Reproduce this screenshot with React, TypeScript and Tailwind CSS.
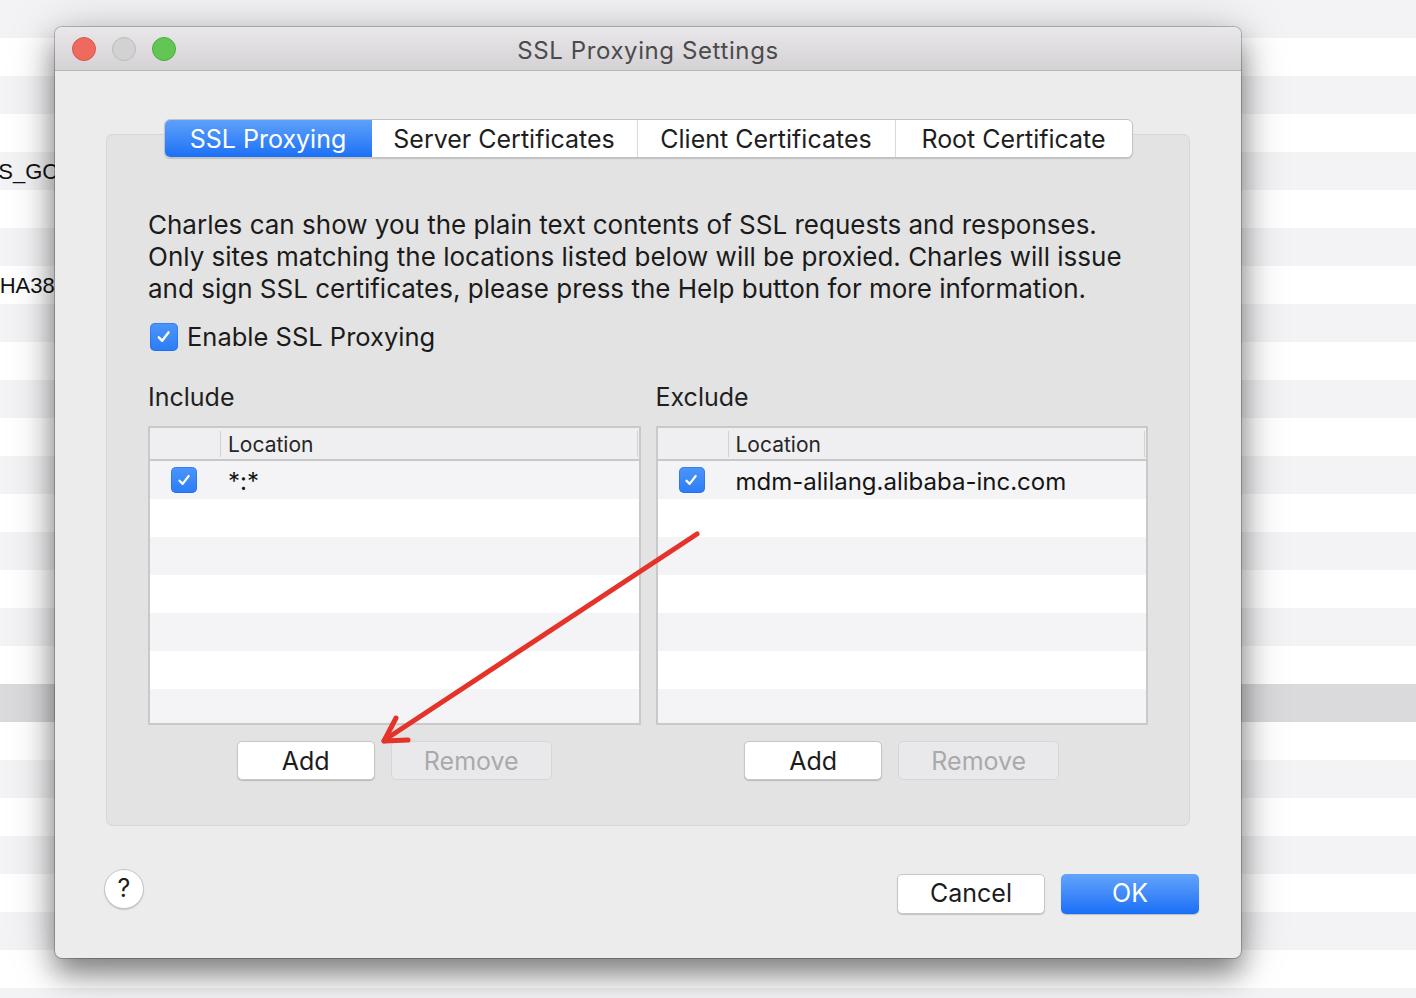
import { useState } from 'react'

const bgRows = Array.from({ length: 27 }, (_, i) => i)

function Check({ size = 26 }: { size?: number }) {
    return (
        <div
            className="flex items-center justify-center rounded-[5px] bg-gradient-to-b from-[#4c95fa] to-[#2a7cf6] shadow-[inset_0_0_0_1px_rgba(20,90,220,0.35)]"
            style={{ width: size, height: size }}
        >
            <svg width={size * 0.62} height={size * 0.62} viewBox="0 0 16 16" fill="none">
                <path d="M3.5 8.6 L6.6 11.8 L12.6 4" stroke="white" strokeWidth="2.2" strokeLinecap="round" strokeLinejoin="round" />
            </svg>
        </div>
    )
}

function Table({ checked, location }: { checked: boolean; location: string }) {
    const rows = [0, 1, 2, 3, 4, 5, 6]
    return (
        <div className="h-[299px] border-2 border-[#c9c9c9] bg-white overflow-hidden">
            <div className="flex h-[33px] items-center border-b-2 border-[#c8c8c8] bg-[#efeff1]">
                <div className="w-[71px] h-[26px] border-r border-[#d2d2d2]" />
                <div className="flex-1 pl-[7px] pt-[2px] text-[21px] text-[#262626] leading-none">Location</div>
                <div className="w-px h-[26px] bg-[#d2d2d2] mr-[1px]" />
            </div>
            {rows.map((i) => (
                <div key={i} className={`flex h-[38px] items-center ${i % 2 === 0 ? 'bg-[#f4f4f6]' : 'bg-white'}`}>
                    {i === 0 && (
                        <>
                            <div className="w-[72px] pl-[21px]">
                                {checked && <Check />}
                            </div>
                            <div className="pl-[6px] pt-[4px] text-[24px] text-[#151515] leading-none">{location}</div>
                        </>
                    )}
                </div>
            ))}
        </div>
    )
}

function Btn({ label, disabled, w }: { label: string; disabled?: boolean; w: number }) {
    return (
        <button
            className={`h-[39px] rounded-[5px] pt-[2px] text-[25px] leading-none ${
                disabled
                    ? 'bg-[#e9e9eb] border border-[#d6d6d8] text-[#a9a9ab]'
                    : 'bg-white border border-[#c6c6c6] text-[#1c1c1c] shadow-[0_1px_1px_rgba(0,0,0,0.18)]'
            }`}
            style={{ width: w }}
        >
            {label}
        </button>
    )
}

function ListColumn({ title, checked, location }: { title: string; checked: boolean; location: string }) {
    return (
        <div className="flex flex-col">
            <div className="h-[32px] text-[25px] leading-[32px] text-[#1f1f1f]">{title}</div>
            <div className="mt-[13px]">
                <Table checked={checked} location={location} />
            </div>
            <div className="mt-[16px] flex justify-center gap-[16px]">
                <Btn label="Add" w={138} />
                <Btn label="Remove" w={161} disabled />
            </div>
        </div>
    )
}

export default function App() {
    const [tab] = useState('SSL Proxying')
    const tabs = [
        { name: 'SSL Proxying', w: 207 },
        { name: 'Server Certificates', w: 265 },
        { name: 'Client Certificates', w: 258 },
        { name: 'Root Certificate', w: 237 },
    ]

    return (
        <div className="relative h-[998px] w-[1416px] overflow-hidden bg-white font-['Inter','Liberation_Sans',sans-serif]">
            {/* desktop list behind the dialog */}
            <div className="flex flex-col">
                {bgRows.map((i) => (
                    <div
                        key={i}
                        className={`h-[38px] flex items-center text-[22px] text-[#111] font-['Liberation_Sans',sans-serif] whitespace-nowrap ${
                            i === 18 ? 'bg-[#dadadc]' : i % 2 === 0 ? 'bg-[#f3f3f5]' : 'bg-white'
                        }`}
                    >
                        {i === 4 && <span className="ml-[-31px]">AES_GCM</span>}
                        {i === 7 && <span className="ml-[-15px]">SHA384</span>}
                    </div>
                ))}
            </div>

            {/* dialog window */}
            <div className="absolute left-[55px] top-[27px] flex h-[931px] w-[1186px] flex-col overflow-hidden rounded-[7px] bg-[#ececec] shadow-[0_0_0_1px_rgba(0,0,0,0.22),0_16px_28px_rgba(0,0,0,0.42),0_4px_50px_rgba(0,0,0,0.22)]">
                {/* title bar */}
                <div className="relative flex h-[44px] items-center border-b border-[#b9b9b9] bg-gradient-to-b from-[#e9e7e9] to-[#d4d2d4]">
                    <div className="flex gap-[16px] pl-[17px]">
                        <div className="h-[24px] w-[24px] rounded-full border border-[#d8574c] bg-[#ee6a5f]" />
                        <div className="h-[24px] w-[24px] rounded-full border border-[#bcbcbc] bg-[#d2d2d2]" />
                        <div className="h-[24px] w-[24px] rounded-full border border-[#4eab40] bg-[#62c655]" />
                    </div>
                    <div className="absolute inset-0 flex items-center justify-center pt-[5px] text-[24px] tracking-[0.6px] text-[#4b4b4b]">
                        SSL Proxying Settings
                    </div>
                </div>

                {/* body */}
                <div className="flex flex-1 flex-col px-[51px] pt-[48px]">
                    <div className="relative z-10 flex justify-center">
                        <div className="flex h-[39px] overflow-hidden rounded-[6px] border border-[#c3c3c3] bg-white shadow-[0_1px_1px_rgba(0,0,0,0.15)]">
                            {tabs.map((t, i) => (
                                <div
                                    key={t.name}
                                    style={{ width: t.w }}
                                    className={`flex items-center justify-center pt-[2px] text-[25px] leading-none ${
                                        t.name === tab
                                            ? 'bg-gradient-to-b from-[#5ea0fb] to-[#1970f6] text-white'
                                            : 'text-[#1e1e1e]'
                                    } ${i > 1 ? 'border-l border-[#dadada]' : ''}`}
                                >
                                    {t.name}
                                </div>
                            ))}
                        </div>
                    </div>

                    <div className="mt-[-24px] h-[692px] rounded-[6px] border border-[#d7d7d7] bg-[#e3e3e3] px-[41px] pt-[74px]">
                        <div className="whitespace-nowrap text-[26px] leading-[32px] text-[#1b1b1b]">
                            Charles can show you the plain text contents of SSL requests and responses.
                            <br />
                            Only sites matching the locations listed below will be proxied. Charles will issue
                            <br />
                            and sign SSL certificates, please press the Help button for more information.
                        </div>

                        <div className="mt-[18px] flex items-center gap-[9px] pl-[2px]">
                            <Check size={28} />
                            <span className="text-[25.5px] leading-none text-[#1b1b1b]">Enable SSL Proxying</span>
                        </div>

                        <div className="mt-[30px] grid grid-cols-2 gap-[15px]">
                            <ListColumn title="Include" checked location="*:*" />
                            <ListColumn title="Exclude" checked location="mdm-alilang.alibaba-inc.com" />
                        </div>
                    </div>

                    <div className="mt-[43px] flex items-start justify-between">
                        <div className="ml-[-2px] flex h-[40px] w-[40px] items-center justify-center rounded-full border border-[#c4c4c4] bg-white text-[25px] text-[#1e1e1e] shadow-[0_1px_1px_rgba(0,0,0,0.15)]">
                            ?
                        </div>
                        <div className="mr-[-9px] mt-[5px] flex gap-[16px]">
                            <button className="h-[40px] w-[148px] rounded-[5px] border border-[#c6c6c6] bg-white text-[25px] text-[#1c1c1c] shadow-[0_1px_1px_rgba(0,0,0,0.18)]">
                                Cancel
                            </button>
                            <button className="h-[40px] w-[138px] rounded-[5px] bg-gradient-to-b from-[#62a3fb] to-[#176ef6] text-[25px] text-white shadow-[0_1px_1px_rgba(0,0,0,0.2)]">
                                OK
                            </button>
                        </div>
                    </div>
                </div>
            </div>

            {/* annotation arrow */}
            <svg className="absolute left-0 top-0 pointer-events-none" width="1416" height="998">
                <g stroke="#e5332a" strokeWidth="5" strokeLinecap="round" fill="none">
                    <path d="M697 534 L386 739" />
                    <path d="M384 741 L396 718" />
                    <path d="M384 741 L408 740" />
                </g>
            </svg>
        </div>
    )
}
